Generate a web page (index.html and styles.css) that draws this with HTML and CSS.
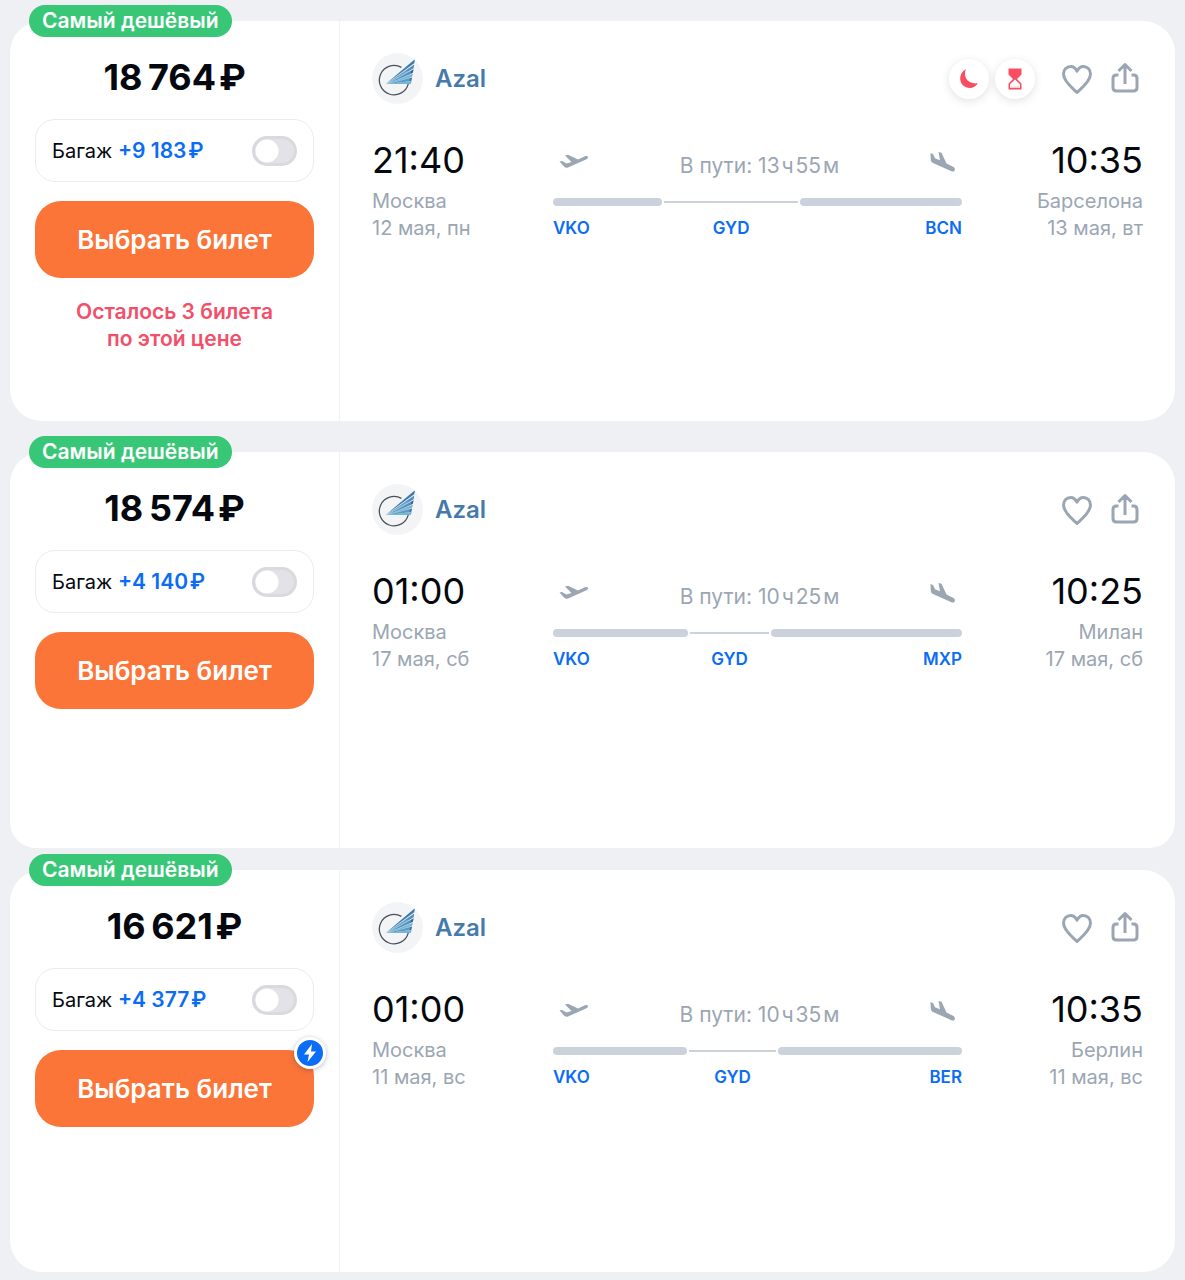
FILE: index.html
```
<!DOCTYPE html>
<html lang="ru">
  <head>
    <meta charset="UTF-8" />
    <meta name="viewport" content="width=device-width, initial-scale=1.0">
    <title>Авиабилеты</title>
    <link rel="stylesheet" href="styles.css">
  </head>
  <body>
    <!-- shared icons -->
    <svg class="sprite" aria-hidden="true">
      <symbol id="azal" viewBox="0 0 52 52">
        <path d="M30 14.700A15 15 0 1 0 37 31.500" fill="none" stroke="#4b5058" stroke-width="1.300"/>
        <path d="M14 31.500L44 6L43 10.500Z" fill="#3f79ac"/>
        <path d="M15 31.300L43 11.800L42.500 15.500Z" fill="#4f8fc0"/>
        <path d="M16 31.400L42.500 16.500L41.500 20.500Z" fill="#35618f"/>
        <path d="M16 31.500L42 21.200L40.500 24.500Z" fill="#6db0d6"/>
        <path d="M16 31.600L41 25L40 28.500Z" fill="#3d76a8"/>
        <path d="M14 31.700L40.500 28.500L39.500 31.700Z" fill="#71b4d4"/>
        <path d="M14 31.500L34 18L40 18L38 30.500Z" fill="#7ebbdc" opacity=".5"/>
      </symbol>
      <symbol id="heart" viewBox="0 0 36 36">
        <path d="M18 31.500C14.500 28 4.500 20.500 4.500 13C4.500 8.500 7.800 5.500 11.500 5.500C14.800 5.500 16.800 7.500 18 10.200C19.200 7.500 21.200 5.500 24.500 5.500C28.200 5.500 31.500 8.500 31.500 13C31.500 20.500 21.500 28 18 31.500Z" fill="none" stroke="currentColor" stroke-width="3" stroke-linejoin="round"/>
      </symbol>
      <symbol id="share" viewBox="0 0 36 36">
        <path d="M11.500 14H9.500Q6 14 6 17.500V26.500Q6 30 9.500 30H26.500Q30 30 30 26.500V17.500Q30 14 26.500 14H24.500M18 23V3.500M11.500 10L18 3.500L24.500 10" fill="none" stroke="currentColor" stroke-width="3" stroke-linejoin="round"/>
      </symbol>
      <symbol id="takeoff" viewBox="0 0 30 20">
        <path d="M.5 9.500L3 9L7.500 11.500L12.500 10L6 3.500L9 2.800L19 7.500L26 4.200C29 3 30.200 6 27.500 7.300L9 15.500Q7 16.300 5.500 15Z" fill="currentColor"/>
      </symbol>
      <symbol id="landing" viewBox="0 0 26 22">
        <path d="M.5 1L3 2L5 6.200L10 8.300L8.500 0L11.500 .8L16.500 11.500L23.500 15C26 16.500 25 20.500 22 19.400L3 11Q1 10 .8 8Z" fill="currentColor"/>
      </symbol>
      <symbol id="moon" viewBox="0 0 24 24">
        <path d="M9 2C6 8.500 9.500 17.500 20.800 16.300C18.500 20.500 13.500 22.300 9 20.300C1.500 17 1 6.500 9 2Z" fill="currentColor"/>
      </symbol>
      <symbol id="hourglass" viewBox="0 0 24 24">
        <path d="M5.500 1.500H18.500V7.500L14 12L18.500 16.500V22.500H5.500V16.500L10 12L5.500 7.500Z" fill="currentColor"/>
        <path d="M12 12.500L17 17.200V21H7V17.200Z" fill="#fff"/>
        <path d="M7 21L8 19.500H16L17 21Z" fill="currentColor" opacity=".3"/>
      </symbol>
      <symbol id="bolt" viewBox="0 0 26 26">
        <path d="M15 4L7 14.500H12L10.500 22L19 11.500H14Z" fill="#fff"/>
      </symbol>
    </svg>

    <main class="tickets">
      <article class="ticket">
        <span class="badge">Самый дешёвый</span>
        <div class="side">
          <div class="price">18&#8201;764&#8202;₽</div>
          <label class="baggage">
            <span>Багаж <b>+9 183&#8202;₽</b></span>
            <input type="checkbox" class="toggle">
          </label>
          <button type="button" class="select-btn">Выбрать билет</button>
          <p class="left">Осталось 3 билета<br>по этой цене</p>
        </div>
        <div class="info">
          <header class="head">
            <svg class="logo"><use href="#azal"/></svg>
            <span class="airline">Azal</span>
            <span class="tags">
              <span class="tag"><svg><use href="#moon"/></svg></span>
              <span class="tag"><svg><use href="#hourglass"/></svg></span>
            </span>
            <button type="button" class="icon-btn" aria-label="В избранное"><svg><use href="#heart"/></svg></button>
            <button type="button" class="icon-btn" aria-label="Поделиться"><svg><use href="#share"/></svg></button>
          </header>
          <div class="flight">
            <div class="point">
              <div class="time">21:40</div>
              <div>Москва</div>
              <div>12 мая, пн</div>
            </div>
            <div class="route">
              <div class="duration">
                <svg class="takeoff"><use href="#takeoff"/></svg>
                <span>В пути: 13&#8202;ч&#8202;55&#8202;м</span>
                <svg class="landing"><use href="#landing"/></svg>
              </div>
              <div class="legs" style="grid-template-columns: 110fr 134fr 163fr">
                <i class="leg"></i><i class="stop"></i><i class="leg"></i>
                <span class="code">VKO</span><span class="code">GYD</span><span class="code">BCN</span>
              </div>
            </div>
            <div class="point arrival">
              <div class="time">10:35</div>
              <div>Барселона</div>
              <div>13 мая, вт</div>
            </div>
          </div>
        </div>
      </article>

      <article class="ticket ticket-short">
        <span class="badge">Самый дешёвый</span>
        <div class="side">
          <div class="price">18&#8201;574&#8202;₽</div>
          <label class="baggage">
            <span>Багаж <b>+4 140&#8202;₽</b></span>
            <input type="checkbox" class="toggle">
          </label>
          <button type="button" class="select-btn">Выбрать билет</button>
        </div>
        <div class="info">
          <header class="head">
            <svg class="logo"><use href="#azal"/></svg>
            <span class="airline">Azal</span>
            <button type="button" class="icon-btn" aria-label="В избранное"><svg><use href="#heart"/></svg></button>
            <button type="button" class="icon-btn" aria-label="Поделиться"><svg><use href="#share"/></svg></button>
          </header>
          <div class="flight">
            <div class="point">
              <div class="time">01:00</div>
              <div>Москва</div>
              <div>17 мая, сб</div>
            </div>
            <div class="route">
              <div class="duration">
                <svg class="takeoff"><use href="#takeoff"/></svg>
                <span>В пути: 10&#8202;ч&#8202;25&#8202;м</span>
                <svg class="landing"><use href="#landing"/></svg>
              </div>
              <div class="legs" style="grid-template-columns: 135fr 80fr 191fr">
                <i class="leg"></i><i class="stop"></i><i class="leg"></i>
                <span class="code">VKO</span><span class="code">GYD</span><span class="code">MXP</span>
              </div>
            </div>
            <div class="point arrival">
              <div class="time">10:25</div>
              <div>Милан</div>
              <div>17 мая, сб</div>
            </div>
          </div>
        </div>
      </article>

      <article class="ticket">
        <span class="badge">Самый дешёвый</span>
        <div class="side">
          <div class="price">16&#8201;621&#8202;₽</div>
          <label class="baggage">
            <span>Багаж <b>+4 377&#8202;₽</b></span>
            <input type="checkbox" class="toggle">
          </label>
          <button type="button" class="select-btn">Выбрать билет
            <svg class="bolt"><use href="#bolt"/></svg>
          </button>
        </div>
        <div class="info">
          <header class="head">
            <svg class="logo"><use href="#azal"/></svg>
            <span class="airline">Azal</span>
            <button type="button" class="icon-btn" aria-label="В избранное"><svg><use href="#heart"/></svg></button>
            <button type="button" class="icon-btn" aria-label="Поделиться"><svg><use href="#share"/></svg></button>
          </header>
          <div class="flight">
            <div class="point">
              <div class="time">01:00</div>
              <div>Москва</div>
              <div>11 мая, вс</div>
            </div>
            <div class="route">
              <div class="duration">
                <svg class="takeoff"><use href="#takeoff"/></svg>
                <span>В пути: 10&#8202;ч&#8202;35&#8202;м</span>
                <svg class="landing"><use href="#landing"/></svg>
              </div>
              <div class="legs" style="grid-template-columns: 134fr 88fr 184fr">
                <i class="leg"></i><i class="stop"></i><i class="leg"></i>
                <span class="code">VKO</span><span class="code">GYD</span><span class="code">BER</span>
              </div>
            </div>
            <div class="point arrival">
              <div class="time">10:35</div>
              <div>Берлин</div>
              <div>11 мая, вс</div>
            </div>
          </div>
        </div>
      </article>
    </main>
  </body>
</html>
```
FILE: styles.css
```
* {
  box-sizing: border-box;
}

body {
  margin: 0;
  background: #eff0f4;
  color: #05080f;
  font-family: Inter, "Liberation Sans", sans-serif;
  font-size: 20px;
  line-height: 27px;
}

svg {
  display: block;
}

.sprite {
  position: absolute;
  width: 0;
  height: 0;
}

.tickets {
  padding: 21px 10px 8px;
}

.ticket {
  position: relative;
  display: flex;
  min-height: 400px;
  margin-bottom: 31px;
  background: #fff;
  border-radius: 32px;
}

.ticket:last-child {
  min-height: 402px;
  margin-bottom: 0;
}

.ticket-short {
  min-height: 396px;
  margin-bottom: 22px;
  border-radius: 32px 32px 26px 26px;
}

.badge {
  position: absolute;
  top: -16px;
  left: 19px;
  padding: 0 13px;
  border-radius: 16px;
  background: #38c776;
  color: #fff;
  font-size: 21px;
  font-weight: 600;
  line-height: 32px;
}

/* left column */
.side {
  flex: 0 0 330px;
  padding: 34px 25px 24px;
  border-right: 1px solid #f1f2f5;
}

.price {
  font-size: 36px;
  font-weight: 700;
  line-height: 44px;
  text-align: center;
}

.baggage {
  display: flex;
  align-items: center;
  justify-content: space-between;
  height: 63px;
  margin: 20px 0 19px;
  padding: 0 16px;
  border: 1px solid #ebecf0;
  border-radius: 20px;
}

.baggage b {
  color: #0b6cf5;
  font-size: 21px;
  font-weight: 600;
}

.toggle {
  appearance: none;
  width: 45px;
  height: 30px;
  margin: 0;
  border: 3px solid #d9d9de;
  border-radius: 15px;
  background: radial-gradient(circle at 12px 12px, #fff 11px, #e2e2e7 12px);
}

.select-btn {
  position: relative;
  display: block;
  width: 100%;
  height: 77px;
  padding: 0;
  border: 0;
  border-radius: 26px;
  background: #fb7438;
  color: #fff;
  font-family: inherit;
  font-size: 26px;
  font-weight: 600;
}

.bolt {
  position: absolute;
  top: -13px;
  right: -12px;
  width: 32px;
  height: 32px;
  border: 3px solid #fff;
  border-radius: 50%;
  background: #0b6cf5;
  box-shadow: 0 1px 5px rgba(40, 60, 100, 0.35);
}

.left {
  margin: 20px 0 0;
  color: #f2506a;
  font-size: 21px;
  font-weight: 600;
  text-align: center;
}

/* right column */
.info {
  flex: 1;
  min-width: 0;
  padding: 32px;
}

.head {
  display: flex;
  align-items: center;
  gap: 12px;
  height: 51px;
}

.logo {
  width: 51px;
  height: 51px;
  border-radius: 50%;
  background: #f3f4f6;
}

.airline {
  margin-right: auto;
  color: #457aab;
  font-size: 24px;
  font-weight: 600;
}

.tags {
  display: flex;
  gap: 6px;
  margin-right: 12px;
}

.tag {
  display: flex;
  align-items: center;
  justify-content: center;
  width: 40px;
  height: 40px;
  border-radius: 50%;
  background: #fff;
  box-shadow: 0 2px 8px rgba(60, 70, 90, 0.16);
  color: #fb4c62;
}

.tag svg {
  width: 24px;
  height: 24px;
}

.icon-btn {
  padding: 0;
  border: 0;
  background: none;
  color: #9ba6b4;
}

.icon-btn svg {
  width: 36px;
  height: 36px;
}

.flight {
  display: grid;
  grid-template-columns: 181px 1fr 181px;
  margin-top: 34px;
}

.point {
  color: #9ba6b3;
}

.time {
  margin-bottom: 6px;
  color: #05080f;
  font-size: 36px;
  line-height: 44px;
}

.arrival {
  text-align: right;
}

.duration {
  display: flex;
  justify-content: space-between;
  height: 27px;
  margin: 14px 0 19px;
  padding: 0 6px;
  color: #9ba6b3;
  font-size: 21px;
}

.takeoff {
  width: 30px;
  height: 20px;
}

.landing {
  width: 26px;
  height: 22px;
}

.legs {
  display: grid;
  align-items: center;
  gap: 9px 2px;
}

.leg {
  height: 8px;
  border-radius: 4px;
  background: #cbd2db;
}

.stop {
  height: 2px;
  background: #cbd2db;
}

.code {
  color: #0b6cf5;
  font-size: 17px;
  font-weight: 600;
  text-align: center;
}

.code:nth-of-type(1) {
  text-align: left;
}

.code:nth-of-type(3) {
  text-align: right;
}
```
